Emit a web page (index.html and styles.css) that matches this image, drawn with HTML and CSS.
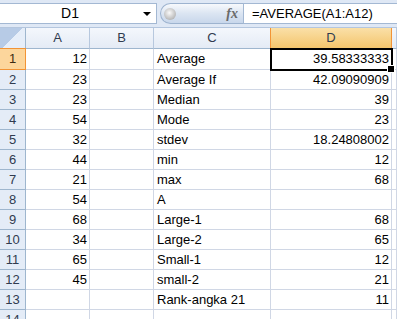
FILE: index.html
```html
<!DOCTYPE html>
<html lang="en">
  <head>
    <meta charset="UTF-8" />
    <title>Book1</title>
    <link rel="stylesheet" href="styles.css">
  </head>
  <body>
    <div class="formula-bar">
      <div class="name-box"><span>D1</span><i class="drop"></i></div>
      <div class="grip"><i class="knob"></i><span class="fx">fx</span></div>
      <div class="formula">=AVERAGE(A1:A12)</div>
    </div>

    <div class="sheet">
      <div class="corner"></div>
      <div class="col-head">A</div>
      <div class="col-head">B</div>
      <div class="col-head">C</div>
      <div class="col-head on">D</div>
      <div class="col-head"></div>

      <div class="row-head on">1</div>
      <div class="num">12</div><div></div><div class="txt">Average</div><div class="num active">39.58333333</div><div></div>
      <div class="row-head">2</div>
      <div class="num">23</div><div></div><div class="txt">Average If</div><div class="num">42.09090909</div><div></div>
      <div class="row-head">3</div>
      <div class="num">23</div><div></div><div class="txt">Median</div><div class="num">39</div><div></div>
      <div class="row-head">4</div>
      <div class="num">54</div><div></div><div class="txt">Mode</div><div class="num">23</div><div></div>
      <div class="row-head">5</div>
      <div class="num">32</div><div></div><div class="txt">stdev</div><div class="num">18.24808002</div><div></div>
      <div class="row-head">6</div>
      <div class="num">44</div><div></div><div class="txt">min</div><div class="num">12</div><div></div>
      <div class="row-head">7</div>
      <div class="num">21</div><div></div><div class="txt">max</div><div class="num">68</div><div></div>
      <div class="row-head">8</div>
      <div class="num">54</div><div></div><div class="txt">A</div><div></div><div></div>
      <div class="row-head">9</div>
      <div class="num">68</div><div></div><div class="txt">Large-1</div><div class="num">68</div><div></div>
      <div class="row-head">10</div>
      <div class="num">34</div><div></div><div class="txt">Large-2</div><div class="num">65</div><div></div>
      <div class="row-head">11</div>
      <div class="num">65</div><div></div><div class="txt">Small-1</div><div class="num">12</div><div></div>
      <div class="row-head">12</div>
      <div class="num">45</div><div></div><div class="txt">small-2</div><div class="num">21</div><div></div>
      <div class="row-head">13</div>
      <div></div><div></div><div class="txt">Rank-angka 21</div><div class="num">11</div><div></div>
      <div class="row-head">14</div>
      <div></div><div></div><div></div><div></div><div></div>
    </div>
  </body>
</html>
```

FILE: styles.css
```css
* {
  box-sizing: border-box;
}
body {
  margin: 0;
  width: 397px;
  height: 319px;
  overflow: hidden;
  background: #fff;
  font-family: "Liberation Sans", Arial, sans-serif;
  font-size: 13px;
  color: #000;
}

/* formula bar */
.formula-bar {
  display: flex;
  align-items: flex-start;
  height: 28px;
  padding-top: 3px;
  background: #dfe8f5;
  border-bottom: 1px solid #b4c6de;
}
.name-box {
  position: relative;
  width: 157px;
  height: 21px;
  background: #fff;
  border: 1px solid #a3b8d3;
  border-left: none;
  line-height: 19px;
  font-size: 14px;
}
.name-box span {
  display: block;
  width: 140px;
  text-align: center;
}
.drop {
  position: absolute;
  right: 5px;
  top: 8px;
  border-left: 4px solid transparent;
  border-right: 4px solid transparent;
  border-top: 4px solid #000;
}
.grip {
  display: flex;
  align-items: center;
  justify-content: space-between;
  width: 83px;
  height: 21px;
  margin-left: 3px;
  padding: 0 5px 0 3px;
  border: 1px solid #9db3cf;
  border-right: none;
  border-radius: 11px 0 0 11px;
  background: linear-gradient(#f7f9fc, #dbe5f2 50%, #c8d7eb);
}
.knob {
  width: 12px;
  height: 12px;
  border-radius: 50%;
  background: radial-gradient(circle at 45% 40%, #fafafa, #b9b9b9 70%, #a0a0a0);
}
.fx {
  font-family: "Liberation Serif", serif;
  font-style: italic;
  font-weight: bold;
  font-size: 14px;
  color: #6a6a6a;
}
.formula {
  flex: 1;
  height: 21px;
  padding-left: 8px;
  background: #fff;
  border: 1px solid #a3b8d3;
  border-right: none;
  line-height: 19px;
  font-size: 13px;
}

/* grid */
.sheet {
  display: grid;
  grid-template-columns: 26px 64px 64px 117px 121px 1fr;
  grid-template-rows: 21px 21px;
  grid-auto-rows: 20px;
}
.sheet > div {
  border-right: 1px solid #d0d7e5;
  border-bottom: 1px solid #d0d7e5;
  line-height: 19px;
  white-space: nowrap;
}
.sheet > .corner {
  background: linear-gradient(135deg, #b7cbe6 50%, #e6eef9 50%);
  border-right: 1px solid #9eb6ce;
  border-bottom: 1px solid #9eb6ce;
}
.sheet > .col-head {
  text-align: center;
  color: #303b4f;
  background: linear-gradient(#f4f7fc, #e4ebf5);
  border-right: 1px solid #b7c8de;
  border-bottom: 1px solid #9eb6ce;
}
.sheet > .col-head.on {
  background: linear-gradient(#fae0a8, #f4c56c);
  border-right: 1px solid #f29436;
  border-left: 1px solid #f29436;
  border-bottom: 1px solid #1e1e1e;
  margin-left: -1px;
}
.sheet > .row-head {
  text-align: center;
  color: #303b4f;
  background: #e4ecf7;
  border-right: 1px solid #9eb6ce;
  border-bottom: 1px solid #9eb6ce;
}
.sheet > .row-head.on {
  background: #fcd69c;
  border: 1px solid #f29436;
  border-left: none;
  margin-top: -1px;
  color: #3b2a12;
}
.num {
  text-align: right;
  padding-right: 2px;
}
.txt {
  padding-left: 3px;
}
.sheet > .active {
  position: relative;
  outline: 2px solid #000;
  outline-offset: -1px;
}
.active::after {
  content: "";
  position: absolute;
  right: -4px;
  bottom: -4px;
  width: 6px;
  height: 6px;
  background: #000;
  border: 1px solid #fff;
}
```
